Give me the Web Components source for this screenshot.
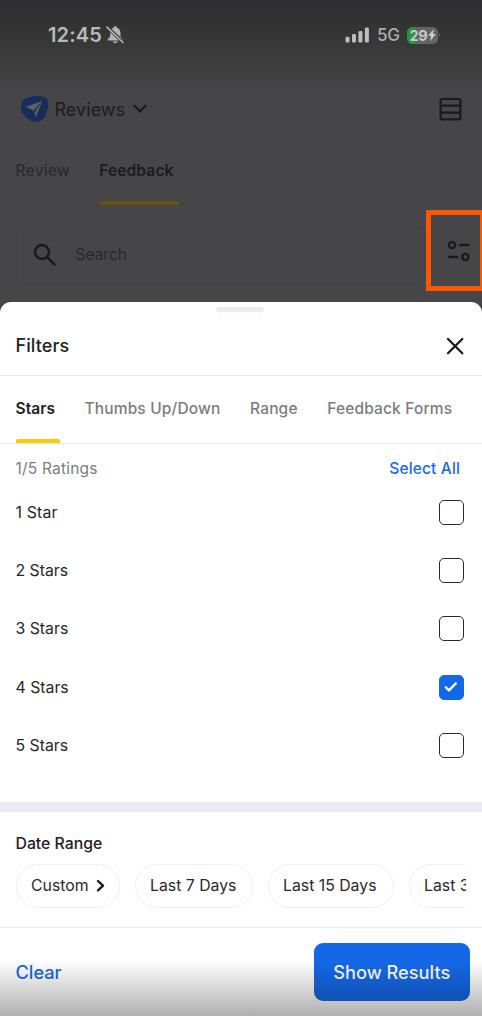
<!DOCTYPE html>
<html lang="en">
<head>
<meta charset="utf-8">
<title>Reviews – Filters</title>
<style>
html,body{margin:0;padding:0}
body{width:482px;height:1016px;overflow:hidden;background:#464648;font-family:Inter,"Liberation Sans",sans-serif;color:#1f2023}
</style>
</head>
<body>
<phone-screen>
  <status-bar slot="top"></status-bar>
  <app-header slot="top">Reviews</app-header>
  <tab-strip slot="top" class="dim" style="--gap:29px;--line:#414144;--bar:#66530f;--idle:#2b2b2e;--on:#1b1b1e;--lh:47px">
    <tab-item style="--ls:.25px">Review</tab-item><tab-item active style="--w:79.5px;--ls:.15px">Feedback</tab-item>
  </tab-strip>
  <search-row slot="top">Search</search-row>
  <filter-sheet>
    <span slot="title">Filters</span>
    <tab-strip style="--h:67px;--gap:29.5px;--line:#e4e6ee;--bar:#fccb08;--idle:#7c7c7f;--on:#1f2023;--lh:65px">
      <tab-item active style="--w:44px;--ls:.05px">Stars</tab-item><tab-item>Thumbs Up/Down</tab-item><tab-item>Range</tab-item><tab-item>Feedback Forms</tab-item>
    </tab-strip>
    <rating-list>
      <span slot="count">1/5 Ratings</span><span slot="all">Select All</span>
      <check-row style="letter-spacing:.2px">1 Star</check-row>
      <check-row>2 Stars</check-row>
      <check-row>3 Stars</check-row>
      <check-row checked>4 Stars</check-row>
      <check-row>5 Stars</check-row>
    </rating-list>
    <date-range>
      <span slot="label">Date Range</span>
      <date-chip arrow style="width:104px">Custom</date-chip>
      <date-chip style="width:118px">Last 7 Days</date-chip>
      <date-chip style="width:126px">Last 15 Days</date-chip>
      <date-chip style="width:128px">Last 30 Days</date-chip>
    </date-range>
    <action-bar><span slot="clear">Clear</span><span slot="go">Show Results</span></action-bar>
  </filter-sheet>
</phone-screen>
<script>
const define = (name, html) => customElements.define(name, class extends HTMLElement {
  constructor() {
    super();
    const t = document.createElement('template');
    t.innerHTML = html;
    this.attachShadow({mode: 'open'}).append(t.content.cloneNode(true));
  }
});

define('phone-screen', `<style>
:host{display:flex;flex-direction:column;width:482px;height:1016px;position:relative;overflow:hidden}
.top{height:302px;flex:none;display:flex;flex-direction:column;background:linear-gradient(#2e2e30 0,#323233 20px,#3c3c3d 60px,#464648 92px)}
.shade{position:absolute;left:0;right:0;bottom:0;height:56px;background:linear-gradient(rgba(0,0,0,0),rgba(0,0,0,.12) 40%,rgba(0,0,0,.31));pointer-events:none}
.mark{position:absolute;left:426px;top:210px;width:49px;height:71px;border:5px solid #ff5500}
</style><div class="top"><slot name="top"></slot></div><slot></slot><div class="shade"></div><div class="mark"></div>`);

define('status-bar', `<style>
:host{display:flex;height:70px;align-items:center;padding:0 41px 0 48px;color:#b9b9ba;box-sizing:border-box}
.time{font-size:20px;font-weight:600;letter-spacing:.15px;line-height:24px}
.g{font-size:17px;font-weight:500;margin-left:7px;width:22px;line-height:20px;letter-spacing:-.3px;color:#acacad}
.bell{margin-left:4px}.sig{margin-left:auto}
.bat{display:flex;align-items:center;justify-content:center;width:31px;height:17px;margin-left:8px;border-radius:5.500px;background:linear-gradient(90deg,#2d9142 9px,#646466 9px);font-size:14.500px;font-weight:700;line-height:17px;letter-spacing:-.2px;color:#c8c8c9}
</style><span class="time">12:45</span>
<svg class="bell" width="19" height="20" viewBox="0 0 19 20"><g fill="#b4b4b5"><path d="M9.300 1.200c-1 0-1.700.6-1.900 1.500C5 3.600 4.100 5.700 4.100 8v3.500L1.800 14.300v1.300h15v-1.300l-2.300-2.800V8c0-2.300-1-4.400-3.300-5.300-.2-.9-.9-1.500-1.900-1.500Z"/><path d="M6.700 16.600a2.700 2.200 0 0 0 5.200 0Z"/></g><path d="m.8 1.800 16.600 15.800" stroke="#373738" stroke-width="3.400"/><path d="m.9 2.100 16 15.300" stroke="#b4b4b5" stroke-width="1.500" stroke-linecap="round"/></svg>
<svg class="sig" width="25" height="16" viewBox="0 0 25 16" fill="#bdbdbe"><rect x=".5" y="9.700" width="4" height="5.800" rx="1.300"/><rect x="7" y="7" width="4" height="8.500" rx="1.300"/><rect x="13.400" y="4" width="4" height="11.500" rx="1.300"/><rect x="19.900" y=".5" width="4" height="15" rx="1.300"/></svg>
<span class="g">5G</span><span class="bat"><span>29</span><svg width="8" height="12" viewBox="0 0 8 12"><path d="M5.900 0 .2 6.700h2.900L2.100 12 7.900 5.100H4.900Z" fill="#d0d0d1"/></svg></span>
<svg width="3" height="6" viewBox="0 0 3 6"><path d="M1 .8a2.700 2.700 0 0 1 0 4.400Z" fill="#646466"/></svg>`);

define('app-header', `<style>
:host{display:flex;height:77px;align-items:center;padding:0 20px;box-sizing:border-box;font-size:18px;letter-spacing:.05px;color:#1c1c1f}
span{margin:3px 0 0 5.500px;line-height:24px}.v{margin-left:8px}.l{margin-left:auto}
</style><svg width="29" height="28" viewBox="0 0 29 28"><path d="M.7 11.500C.7 4.500 8 1 17.500 1c7.500 0 10.700 2 10.700 7.500 0 9-4.200 18.700-12 18.700C8.500 27.200.7 18.500.7 11.500Z" fill="#172e5b"/><path d="M22.300 6 5.800 11.800l7.300 3.500L16 22Z" fill="#5c6169"/><path d="m13.100 15.300 9.200-9.300L14.500 18.500Z" fill="#303b51"/></svg>
<span><slot></slot></span>
<svg class="v" width="14" height="10" viewBox="0 0 14 10"><path d="m1.500 1.700 5.500 5.500 5.500-5.500" fill="none" stroke="#1b1b1d" stroke-width="2.300" stroke-linecap="round" stroke-linejoin="round"/></svg>
<svg class="l" width="23" height="24" viewBox="0 0 23 24" fill="none" stroke="#1a1a1c" stroke-width="2.200"><rect x="1.600" y="2" width="19.800" height="20.300" rx="1.500"/><path d="M1.500 8.700h20M1.500 15.700h20"/></svg>`);

define('tab-strip', `<style>
:host{display:flex;height:var(--h);padding:0 15.500px;gap:var(--gap);border-bottom:1.500px solid var(--line);box-sizing:content-box}
:host(.dim){height:57px}
</style><slot></slot>`);
define('tab-item', `<style>
:host{display:block;position:relative;font-size:15.500px;font-weight:500;letter-spacing:var(--ls,.16px);line-height:var(--lh);color:var(--idle);white-space:nowrap}
:host([active]){color:var(--on);font-weight:600}
i{display:none}:host([active]) i{display:block;position:absolute;left:0;bottom:-.5px;width:var(--w);height:4px;border-radius:2px 2px 0 0;background:var(--bar)}
</style><slot></slot><i></i>`);

define('search-row', `<style>
:host{display:flex;padding:20.500px 8px 0 15.500px}
.box{width:410px;height:58px;box-sizing:border-box;border:1px solid #424245;border-radius:10px;display:flex;align-items:center;padding-left:16px;font-size:15.500px;color:#29292c}
.s{margin-right:19px}.f{margin:13px 0 0 20px}
</style><div class="box"><svg class="s" width="24" height="24" viewBox="0 0 24 24" fill="none" stroke="#1b1b1d" stroke-width="2.500" stroke-linecap="round"><circle cx="9" cy="9" r="7"/><path d="m14.300 14.300 7.200 7.200"/></svg><slot></slot></div>
<svg class="f" width="25" height="24" viewBox="0 0 25 24" fill="none" stroke="#1a1a1c" stroke-width="2.400" stroke-linecap="round"><circle cx="6" cy="6" r="3.100"/><path d="M14.200 6h8M3.200 18h8"/><circle cx="19.400" cy="18" r="3.100"/></svg>`);

define('filter-sheet', `<style>
:host{display:flex;flex-direction:column;height:714px;background:#fff;border-radius:11px 11px 0 0}
.grab{width:48px;height:5px;border-radius:2px;background:#e9ecf3;margin:5px auto 0;position:relative;left:-1px}
.h{height:63.500px;flex:none;display:flex;align-items:center;justify-content:space-between;padding:5px 17px 0 15.500px;box-sizing:border-box;border-bottom:1.500px solid #e4e6ee;font-size:18px;font-weight:500;letter-spacing:.1px;line-height:24px}
</style><div class="grab"></div><div class="h"><slot name="title"></slot><svg width="20" height="20" viewBox="0 0 20 20"><path d="m3 3 14.300 14.300M17.300 3 3 17.300" stroke="#18181a" stroke-width="2.200" stroke-linecap="round"/></svg></div><slot></slot>`);

define('rating-list', `<style>
:host{display:block;flex:none;height:368px;padding:0 15.500px;box-sizing:border-box;border-bottom:10px solid #e9edf3}
.h{display:flex;justify-content:space-between;height:39.500px;line-height:50px;padding-right:6.500px;font-size:15.500px;letter-spacing:.2px;color:#7c7c7f}
.a{color:#1769e8;font-weight:500;letter-spacing:.15px}
</style><div class="h"><slot name="count"></slot><span class="a"><slot name="all"></slot></span></div><slot></slot>`);

define('check-row', `<style>
:host{display:flex;height:58.400px;align-items:center;justify-content:space-between;font-size:15.800px;padding-right:3px;line-height:20px;color:#27272a}
span{padding-top:1px}
b{width:25px;height:25px;box-sizing:border-box;border:1.500px solid #29292c;border-radius:5px;display:flex;align-items:center;justify-content:center}
svg{display:none}:host([checked]) b{background:#1468e8;border-color:#1468e8}:host([checked]) svg{display:block}
</style><span><slot></slot></span><b><svg width="14" height="12" viewBox="0 0 14 12"><path d="m1.800 6.200 3.200 3.200 6.800-7" fill="none" stroke="#fff" stroke-width="2.300" stroke-linecap="round" stroke-linejoin="round"/></svg></b>`);

define('date-range', `<style>
:host{display:block;flex:none;border-bottom:1.500px solid #e9ebf0;padding:18px 16.500px 0 15.500px;box-sizing:content-box;height:97px}
.l{font-size:15.800px;font-weight:500;line-height:27px;height:26px}
.c{display:flex;gap:15px;overflow:hidden;margin-top:8px}
</style><div class="l"><slot name="label"></slot></div><div class="c"><slot></slot></div>`);

define('date-chip', `<style>
:host{display:flex;flex:none;height:44px;box-sizing:border-box;border:1.500px solid #edf0f6;border-radius:22px;align-items:center;padding-left:14.500px;font-size:15.800px;white-space:nowrap;color:#29292c}
svg{display:none;margin-left:7.500px}:host([arrow]) svg{display:block}
</style><slot></slot><svg width="10" height="13" viewBox="0 0 10 13"><path d="m2 2 5 4.700-5 4.700" fill="none" stroke="#1b1b1d" stroke-width="2.300" stroke-linecap="round" stroke-linejoin="round"/></svg>`);

define('action-bar', `<style>
:host{display:flex;align-items:center;justify-content:space-between;padding:15.500px 12px 0 15.500px;font-size:18.200px;font-weight:500;color:#1769e8;line-height:24px}
.b{width:156.500px;height:58px;border-radius:9px;background:#1468e8;color:#fff;display:flex;align-items:center;justify-content:center}
</style><span><slot name="clear"></slot></span><div class="b"><slot name="go"></slot></div>`);
</script>
</body>
</html>
